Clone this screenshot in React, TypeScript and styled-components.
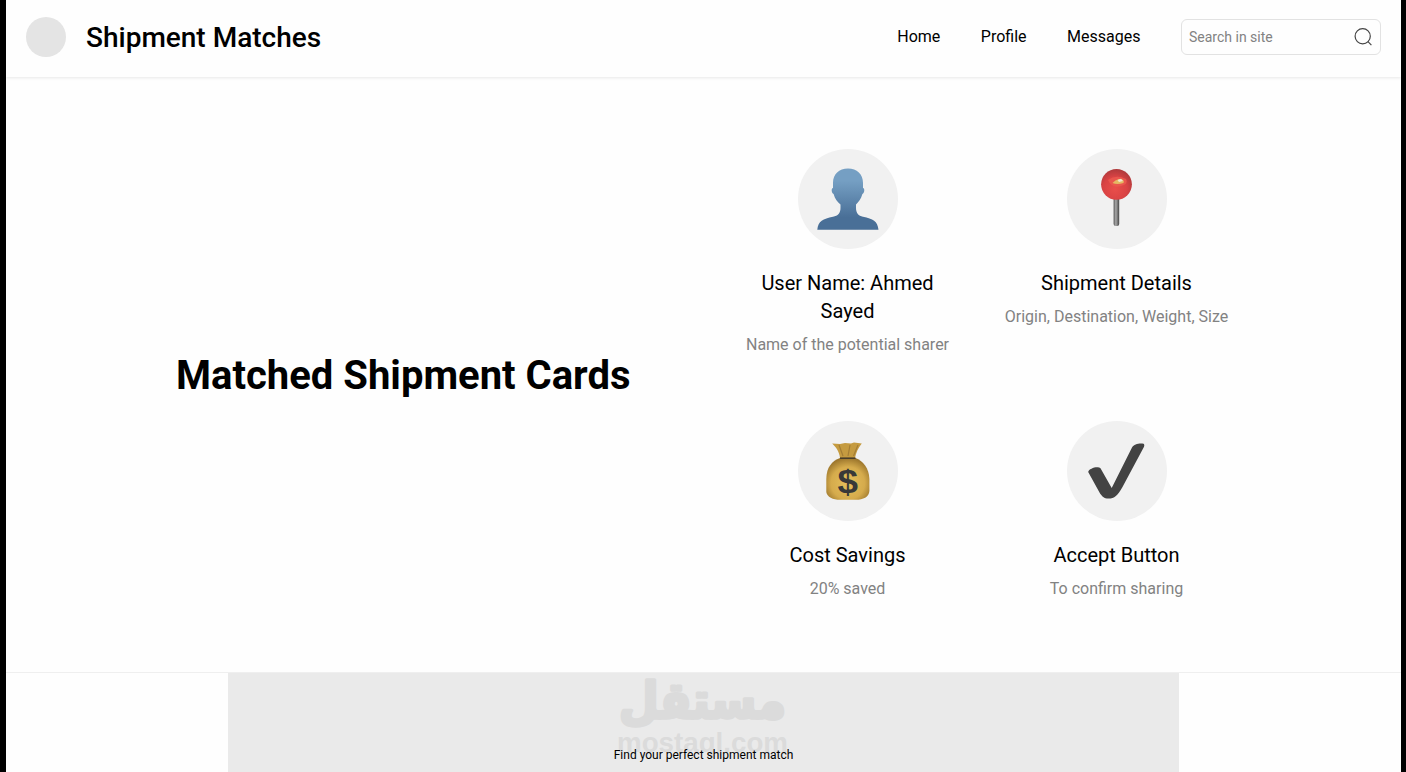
import React from 'react';
import styled, { createGlobalStyle } from 'styled-components';

const GlobalStyle = createGlobalStyle`
  * {
    box-sizing: border-box;
  }

  body {
    margin: 0;
    background: #000;
    color: #000;
    font-family: Roboto, 'Liberation Sans', sans-serif;
    overflow: hidden;
  }
`;

const Page = styled.div`
  display: flex;
  flex-direction: column;
  height: 772px;
  margin: 0 5px 0 6px;
  background: #fefefe;
  overflow: hidden;
`;

const Header = styled.header`
  display: flex;
  align-items: center;
  flex: none;
  height: 77px;
  padding: 0 20px 3px;
  box-shadow: 0 1px 3px rgba(0, 0, 0, 0.09);
`;

const Logo = styled.div`
  width: 40px;
  height: 40px;
  margin-right: 20px;
  border-radius: 50%;
  background: #e4e4e4;
`;

const SiteName = styled.h1`
  margin: 0;
  padding-top: 2px;
  font-size: 28px;
  line-height: 36px;
  font-weight: 500;
`;

const Nav = styled.nav`
  display: flex;
  gap: 40.5px;
  margin-left: auto;
  margin-right: 40.5px;
`;

const NavLink = styled.a`
  font-size: 16px;
  line-height: 24px;
`;

const SearchBox = styled.div`
  display: flex;
  align-items: center;
  justify-content: space-between;
  width: 200px;
  height: 36px;
  padding: 0 7px;
  border: 1px solid #e2e2e2;
  border-radius: 6px;
  color: #828282;
  font-size: 14px;
`;

const Hero = styled.section`
  display: flex;
  align-items: center;
  flex: none;
  height: 596px;
  padding: 0 170px;
  border-bottom: 1px solid #efefef;
`;

const HeroTitle = styled.h2`
  width: 543px;
  margin: 0;
  padding-top: 2px;
  font-size: 40px;
  line-height: 48px;
  font-weight: 700;
`;

const CardGrid = styled.div`
  display: grid;
  grid-template-columns: 229px 229px;
  grid-template-rows: 208px 179px;
  column-gap: 40px;
  row-gap: 64px;
  margin-left: 14px;
`;

const CardContainer = styled.div`
  display: flex;
  flex-direction: column;
  align-items: center;
  text-align: center;
`;

const CardIcon = styled.div`
  width: 100px;
  height: 100px;
  margin-bottom: 20px;
  border-radius: 50%;
  background: #f1f1f1;

  svg {
    display: block;
  }
`;

const CardTitle = styled.h3`
  max-width: 200px;
  margin: 0 0 8px;
  font-size: 20px;
  line-height: 28px;
  font-weight: 400;
`;

const CardText = styled.p`
  margin: 0;
  color: #828282;
  font-size: 16px;
  line-height: 24px;
  white-space: nowrap;
`;

const Banner = styled.section`
  position: relative;
  flex: 1;
  width: 951px;
  margin: 0 auto;
  padding-top: 74px;
  background: #eaeaea;
  text-align: center;
`;

const Watermark = styled.svg`
  position: absolute;
  top: 0;
  left: 380px;
  overflow: visible;
`;

const BannerText = styled.p`
  position: relative;
  margin: 0;
  font-size: 12px;
  line-height: 16px;
`;

const SearchIcon = () => (
  <svg width="20" height="20" viewBox="0 0 20 20" fill="none" stroke="#444" strokeWidth="1.2">
    <circle cx="9.7" cy="9.3" r="7.6" />
    <path d="M15 14.7 L18.4 18.1" />
  </svg>
);

const UserIcon = () => (
  <svg width="100" height="100" viewBox="0 0 100 100">
    <defs>
      <linearGradient id="user" x1="0" y1="0" x2="0" y2="1">
        <stop offset="0.2" stopColor="#759fc3" />
        <stop offset="0.8" stopColor="#496f97" />
      </linearGradient>
    </defs>
    <path
      fill="url(#user)"
      d="M50 19.5 C59 19.5 65 25 65 34 L65 39 C67 39 66.6 44 64.4 45 C63 50 60.5 53 58 55.5 V59 C58 64 60.5 66.8 65 67.8 C75 69.8 79.5 72 80.5 80.7 H19.3 C20.2 72 25 69.8 35 67.8 C40 66.8 42.5 64 42.5 59 V55.5 C39.5 53 37 50 35.6 45 C33.4 44 33 39 35 39 L35 34 C35 25 41 19.5 50 19.5 Z"
    />
  </svg>
);

const PinIcon = () => (
  <svg width="100" height="100" viewBox="0 0 100 100">
    <defs>
      <linearGradient id="needle">
        <stop offset="0" stopColor="#555" />
        <stop offset="0.4" stopColor="#aaa" />
        <stop offset="1" stopColor="#454545" />
      </linearGradient>
      <radialGradient id="ball" cx="0.45" cy="0.65" r="0.65">
        <stop offset="0" stopColor="#e94e4a" />
        <stop offset="0.6" stopColor="#d94344" />
        <stop offset="1" stopColor="#ae393b" />
      </radialGradient>
    </defs>
    <rect x="46.6" y="47" width="5.6" height="30" rx="2" fill="url(#needle)" />
    <circle cx="49.5" cy="35.3" r="15.4" fill="url(#ball)" />
    <path d="M41 31 Q49 25 59 30 Q62 35 54 37 Q45 40 41 31Z" fill="#e9564d" />
    <path d="M45.5 34 Q48 31 52 30 Q58 30 56.5 34 Q50 36 45.5 34Z" fill="#e5b862" />
    <path d="M50.5 31 L54 29.8 L56 32 L52 33Z" fill="#f0e6d0" />
  </svg>
);

const MoneyIcon = () => (
  <svg width="100" height="100" viewBox="0 0 100 100">
    <defs>
      <radialGradient id="bag" cx="0.5" cy="0.6" r="0.6">
        <stop offset="0" stopColor="#e6c05c" />
        <stop offset="0.65" stopColor="#d5ab4c" />
        <stop offset="1" stopColor="#9c762c" />
      </radialGradient>
    </defs>
    <path
      fill="url(#bag)"
      d="M42 37 C34 40 28.5 46 28.3 58 V71 C29 76 35 78.8 42 78.8 H58 C65 78.8 71 76 71.4 70 V58 C71 47 65 40 57.5 37 Z"
    />
    <path
      fill="#c59b40"
      d="M42 37 C41.5 31 38 26 34.2 22.5 L42 23 L47 22 L53 22.6 L56 21.5 L63.8 22.6 C60 27 58 32 57 37 Z"
    />
    <path d="M41 24 L45 35 M52 24 L50 35 M60 24 L55.5 35" stroke="#a57e35" strokeWidth="1.2" />
    <path d="M42 37.2 H57.5" stroke="#4a3e2a" strokeWidth="1.6" />
    <text
      x="49.8"
      y="71.6"
      textAnchor="middle"
      fontFamily="Liberation Sans, sans-serif"
      fontSize="33"
      fontWeight="700"
      textLength="20.5"
      lengthAdjust="spacingAndGlyphs"
      fill="#383838"
    >
      $
    </text>
  </svg>
);

const CheckIcon = () => (
  <svg width="100" height="100" viewBox="0 0 100 100">
    <path
      fill="#434343"
      d="M21.2 51 C22 47.5 30.5 44.8 33.5 47.3 L44.7 67 L65 26.5 C67 22.8 73 22 76.6 22.8 C77.6 23.5 77.4 24.8 76.9 26 L55.5 66 C50.5 74.5 47.5 77.6 41.5 77.6 C37 77.6 35 75.4 32.5 71.5 Z"
    />
  </svg>
);

interface CardProps {
  icon: React.ReactNode;
  title: string;
  text: string;
}

const Card: React.FC<CardProps> = ({ icon, title, text }) => {
  return (
    <CardContainer>
      <CardIcon>{icon}</CardIcon>
      <CardTitle>{title}</CardTitle>
      <CardText>{text}</CardText>
    </CardContainer>
  );
};

const cards: CardProps[] = [
  { icon: <UserIcon />, title: 'User Name: Ahmed Sayed', text: 'Name of the potential sharer' },
  { icon: <PinIcon />, title: 'Shipment Details', text: 'Origin, Destination, Weight, Size' },
  { icon: <MoneyIcon />, title: 'Cost Savings', text: '20% saved' },
  { icon: <CheckIcon />, title: 'Accept Button', text: 'To confirm sharing' },
];

const App = () => {
  return (
    <>
      <GlobalStyle />
      <Page>
        <Header>
          <Logo />
          <SiteName>Shipment Matches</SiteName>
          <Nav>
            <NavLink>Home</NavLink>
            <NavLink>Profile</NavLink>
            <NavLink>Messages</NavLink>
          </Nav>
          <SearchBox>
            Search in site
            <SearchIcon />
          </SearchBox>
        </Header>
        <Hero>
          <HeroTitle>Matched Shipment Cards</HeroTitle>
          <CardGrid>
            {cards.map((card) => (
              <Card key={card.title} {...card} />
            ))}
          </CardGrid>
        </Hero>
        <Banner>
          <Watermark width="190" height="99" viewBox="0 0 190 99" fill="#dbdbdb" stroke="#dbdbdb">
            <text
              x="94.5"
              y="45"
              textAnchor="middle"
              fontFamily="DejaVu Sans, sans-serif"
              fontSize="50"
              fontWeight="700"
              textLength="167"
              lengthAdjust="spacingAndGlyphs"
              strokeWidth="3.5"
              strokeLinejoin="round"
            >
              مستقل
            </text>
            <text
              x="94.5"
              y="79"
              textAnchor="middle"
              fontFamily="Liberation Sans, sans-serif"
              fontSize="28"
              fontWeight="700"
              textLength="171"
              lengthAdjust="spacingAndGlyphs"
              strokeWidth="0"
            >
              mostaql.com
            </text>
          </Watermark>
          <BannerText>Find your perfect shipment match</BannerText>
        </Banner>
      </Page>
    </>
  );
};

export default App;
